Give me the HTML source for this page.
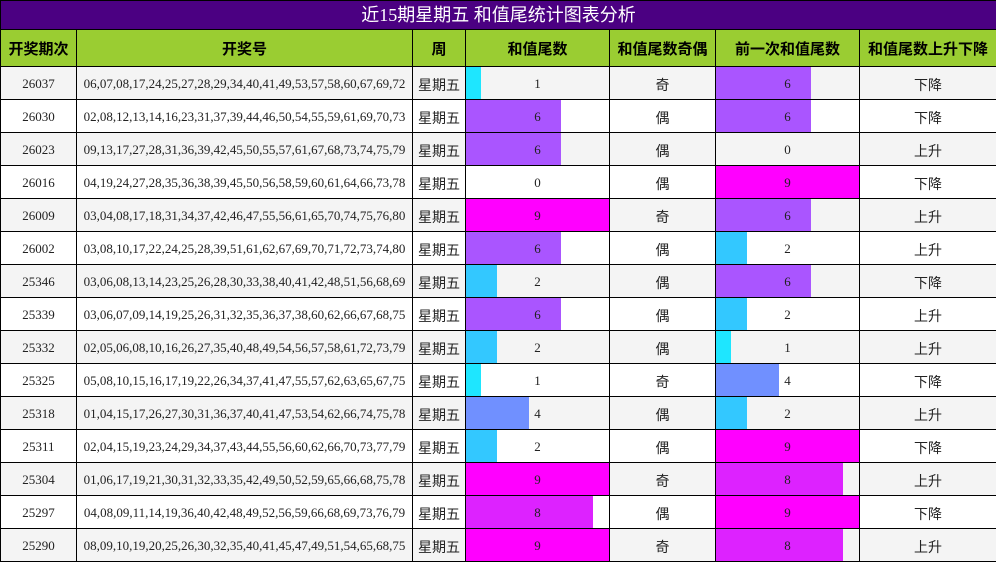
<!DOCTYPE html>
<html><head><meta charset="utf-8"><style>
*{margin:0;padding:0;box-sizing:border-box}
body{width:996px;height:562px;overflow:hidden;background:#fff;font-family:"Liberation Serif","Noto Sans CJK SC",serif}
table{border-collapse:collapse;table-layout:fixed;width:996px;position:absolute;left:0;top:0}
td,th{border:1px solid #000;text-align:center;padding:0;overflow:hidden;white-space:nowrap}
.t td{background:#4b0082;color:#fff;font-family:"Liberation Serif","Noto Sans CJK SC",serif;font-size:18px;height:29px;line-height:26px}
.h th{background:#9acd32;height:37px;font-family:"Liberation Sans","Noto Sans CJK SC",sans-serif;font-size:15px;font-weight:bold;color:#000}
.r td{height:33px;font-size:13px;color:#222;padding-top:1px}
.r:nth-child(odd) td{background:#f4f4f4}
.r:nth-child(even) td{background:#fff}
.r td.c{font-family:"Liberation Sans","Noto Sans CJK SC",sans-serif;font-size:14px;padding-top:4px}
.b{position:relative}
.b i{position:absolute;left:0;top:0;bottom:0}
.b span{position:relative}
.v1{background:#1ee6ff;width:15px}.v2{background:#33c8ff;width:31px}.v4{background:#7090ff;width:63px}
.v6{background:#aa55ff;width:95px}.v8{background:#dd22ff;width:127px}.v9{background:#ff00ff;width:144px}.v0{width:0}
</style></head><body>
<table>
<colgroup><col style="width:76px"><col style="width:336px"><col style="width:53px"><col style="width:144px"><col style="width:106px"><col style="width:144px"><col style="width:137px"></colgroup>
<tbody>
<tr class="t"><td colspan="7">近15期星期五 和值尾统计图表分析</td></tr>
<tr class="h"><th>开奖期次</th><th>开奖号</th><th>周</th><th>和值尾数</th><th>和值尾数奇偶</th><th>前一次和值尾数</th><th>和值尾数上升下降</th></tr>
<tr class="r"><td>26037</td><td>06,07,08,17,24,25,27,28,29,34,40,41,49,53,57,58,60,67,69,72</td><td class="c">星期五</td><td class="b"><i class="v1"></i><span>1</span></td><td class="c">奇</td><td class="b"><i class="v6"></i><span>6</span></td><td class="c">下降</td></tr>
<tr class="r"><td>26030</td><td>02,08,12,13,14,16,23,31,37,39,44,46,50,54,55,59,61,69,70,73</td><td class="c">星期五</td><td class="b"><i class="v6"></i><span>6</span></td><td class="c">偶</td><td class="b"><i class="v6"></i><span>6</span></td><td class="c">下降</td></tr>
<tr class="r"><td>26023</td><td>09,13,17,27,28,31,36,39,42,45,50,55,57,61,67,68,73,74,75,79</td><td class="c">星期五</td><td class="b"><i class="v6"></i><span>6</span></td><td class="c">偶</td><td class="b"><i class="v0"></i><span>0</span></td><td class="c">上升</td></tr>
<tr class="r"><td>26016</td><td>04,19,24,27,28,35,36,38,39,45,50,56,58,59,60,61,64,66,73,78</td><td class="c">星期五</td><td class="b"><i class="v0"></i><span>0</span></td><td class="c">偶</td><td class="b"><i class="v9"></i><span>9</span></td><td class="c">下降</td></tr>
<tr class="r"><td>26009</td><td>03,04,08,17,18,31,34,37,42,46,47,55,56,61,65,70,74,75,76,80</td><td class="c">星期五</td><td class="b"><i class="v9"></i><span>9</span></td><td class="c">奇</td><td class="b"><i class="v6"></i><span>6</span></td><td class="c">上升</td></tr>
<tr class="r"><td>26002</td><td>03,08,10,17,22,24,25,28,39,51,61,62,67,69,70,71,72,73,74,80</td><td class="c">星期五</td><td class="b"><i class="v6"></i><span>6</span></td><td class="c">偶</td><td class="b"><i class="v2"></i><span>2</span></td><td class="c">上升</td></tr>
<tr class="r"><td>25346</td><td>03,06,08,13,14,23,25,26,28,30,33,38,40,41,42,48,51,56,68,69</td><td class="c">星期五</td><td class="b"><i class="v2"></i><span>2</span></td><td class="c">偶</td><td class="b"><i class="v6"></i><span>6</span></td><td class="c">下降</td></tr>
<tr class="r"><td>25339</td><td>03,06,07,09,14,19,25,26,31,32,35,36,37,38,60,62,66,67,68,75</td><td class="c">星期五</td><td class="b"><i class="v6"></i><span>6</span></td><td class="c">偶</td><td class="b"><i class="v2"></i><span>2</span></td><td class="c">上升</td></tr>
<tr class="r"><td>25332</td><td>02,05,06,08,10,16,26,27,35,40,48,49,54,56,57,58,61,72,73,79</td><td class="c">星期五</td><td class="b"><i class="v2"></i><span>2</span></td><td class="c">偶</td><td class="b"><i class="v1"></i><span>1</span></td><td class="c">上升</td></tr>
<tr class="r"><td>25325</td><td>05,08,10,15,16,17,19,22,26,34,37,41,47,55,57,62,63,65,67,75</td><td class="c">星期五</td><td class="b"><i class="v1"></i><span>1</span></td><td class="c">奇</td><td class="b"><i class="v4"></i><span>4</span></td><td class="c">下降</td></tr>
<tr class="r"><td>25318</td><td>01,04,15,17,26,27,30,31,36,37,40,41,47,53,54,62,66,74,75,78</td><td class="c">星期五</td><td class="b"><i class="v4"></i><span>4</span></td><td class="c">偶</td><td class="b"><i class="v2"></i><span>2</span></td><td class="c">上升</td></tr>
<tr class="r"><td>25311</td><td>02,04,15,19,23,24,29,34,37,43,44,55,56,60,62,66,70,73,77,79</td><td class="c">星期五</td><td class="b"><i class="v2"></i><span>2</span></td><td class="c">偶</td><td class="b"><i class="v9"></i><span>9</span></td><td class="c">下降</td></tr>
<tr class="r"><td>25304</td><td>01,06,17,19,21,30,31,32,33,35,42,49,50,52,59,65,66,68,75,78</td><td class="c">星期五</td><td class="b"><i class="v9"></i><span>9</span></td><td class="c">奇</td><td class="b"><i class="v8"></i><span>8</span></td><td class="c">上升</td></tr>
<tr class="r"><td>25297</td><td>04,08,09,11,14,19,36,40,42,48,49,52,56,59,66,68,69,73,76,79</td><td class="c">星期五</td><td class="b"><i class="v8"></i><span>8</span></td><td class="c">偶</td><td class="b"><i class="v9"></i><span>9</span></td><td class="c">下降</td></tr>
<tr class="r"><td>25290</td><td>08,09,10,19,20,25,26,30,32,35,40,41,45,47,49,51,54,65,68,75</td><td class="c">星期五</td><td class="b"><i class="v9"></i><span>9</span></td><td class="c">奇</td><td class="b"><i class="v8"></i><span>8</span></td><td class="c">上升</td></tr>
</tbody></table>
</body></html>
